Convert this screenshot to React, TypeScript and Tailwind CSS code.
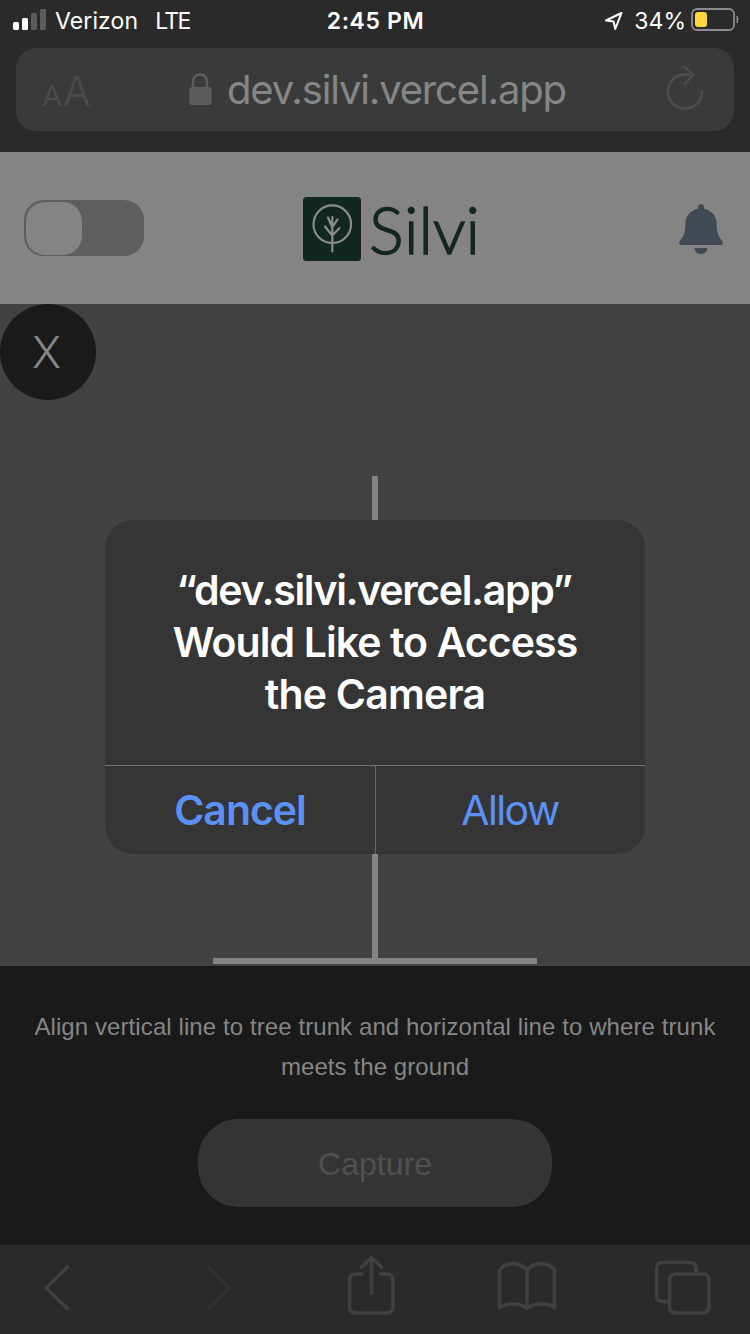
import React from 'react';

const ui = "font-['Inter','Liberation_Sans',sans-serif]";

function StatusBar() {
  return (
    <div className={`${ui} grid h-10 grid-cols-3 items-center text-[23px] leading-[42px] text-white`}>
      <div className="flex h-10 items-center pl-[13px]">
        <svg className="-mt-[2px] mr-[9px] shrink-0" width="33" height="40" viewBox="0 0 33 40">
          <rect x="0" y="22" width="6" height="8" rx="1.5" fill="#fff" />
          <rect x="9" y="18" width="6" height="12" rx="1.5" fill="#fff" />
          <rect x="18" y="13" width="6" height="17" rx="1.5" fill="#5b5b5b" />
          <rect x="27" y="9" width="6" height="21" rx="1.5" fill="#5b5b5b" />
        </svg>
        <span className="tracking-[0.1px]">Verizon</span>
        <span className="ml-[17px] tracking-[-1.7px]">LTE</span>
      </div>
      <div className="pl-px text-center font-semibold tracking-[0.6px]">2:45 PM</div>
      <div className="flex h-10 items-center justify-end pr-[11px]">
        <svg className="-mt-[2px] mr-[11px]" width="20" height="40" viewBox="0 0 20 40">
          <path d="M18.500 13 L3 20.500 L10.600 21.600 L12.200 29 Z" fill="none" stroke="#fff" strokeWidth="2" strokeLinejoin="round" />
        </svg>
        <span className="tracking-[0px]">34%</span>
        <svg className="-mt-[2px] ml-[5px]" width="48" height="40" viewBox="0 0 48 40">
          <rect x="1" y="9" width="42" height="21" rx="5" fill="none" stroke="#8b8b8b" strokeWidth="1.8" />
          <rect x="4" y="12" width="12" height="15" rx="3" fill="#fbd63f" />
          <path d="M46 16 Q48 19.500 46 23 Z" fill="#8b8b8b" stroke="#8b8b8b" />
        </svg>
      </div>
    </div>
  );
}

function AddressBar() {
  return (
    <div className={`${ui} mx-4 mt-2 flex h-[83px] items-center rounded-[20px] bg-[#393b3a]`}>
      <div className="flex w-[172px] items-baseline pl-[26px] pt-[7px] leading-[76px] text-[#4a4b4a]">
        <span className="text-[29px]">A</span>
        <span className="ml-px text-[41px] font-light">A</span>
      </div>
      <svg width="24" height="36" viewBox="0 0 24 36">
        <path d="M5 17 V11 Q5 2.500 12 2.500 Q19 2.500 19 11 V17" fill="none" stroke="#5c5c5c" strokeWidth="2.600" />
        <rect x="1.500" y="15" width="22" height="18" rx="2.500" fill="#5c5c5c" />
      </svg>
      <span className="ml-[15px] w-[340px] whitespace-nowrap text-[40px] leading-[83px] tracking-[-1.150px] text-[#868686]">dev.silvi.vercel.app</span>
      <svg className="ml-[98px] shrink-0" width="40" height="50" viewBox="0 0 40 50" fill="none" stroke="#4a4b4a" strokeWidth="2.800" strokeLinecap="round" strokeLinejoin="round">
        <path d="M37 26.500 A17 17 0 1 1 20 9.500 H27.500" />
        <path d="M19.500 2 L28.500 9.500 L19.500 19" />
      </svg>
    </div>
  );
}

function SiteHeader() {
  return (
    <header className="mt-[21px] flex h-[152px] items-center bg-[#848484]">
      <div className="ml-6 flex h-14 w-[120px] items-center rounded-[20px] bg-[#5e5e5e] px-[2px]">
        <div className="h-[53px] w-14 rounded-[19px] bg-[#848484]" />
      </div>
      <svg className="ml-[159px] mt-[2px] shrink-0" width="58" height="64" viewBox="0 0 58 64">
        <rect width="58" height="64" rx="3.500" fill="#12271f" />
        <g fill="none" stroke="#8a8c8b" strokeWidth="2.200" strokeLinecap="round" strokeLinejoin="round">
          <circle cx="29.300" cy="27.200" r="18.800" />
          <path d="M29.300 29 V54.500 M29.300 38.500 L22 29.500 M29.300 38.500 L36.500 31 M29.300 30.500 L25 20.500 M29.500 30 L34.500 22.500 M29.300 29 V20" />
        </g>
      </svg>
      <span className="ml-2 mt-[2px] w-[110px] whitespace-nowrap font-['Lato',sans-serif] text-[65px] font-light leading-[76px] tracking-[0.1px] text-[#12271f] [font-kerning:none] [-webkit-text-stroke:1.4px_#12271f]">Silvi</span>
      <svg className="ml-[200px] mt-[3px] shrink-0" width="44" height="52" viewBox="0 0 44 52" fill="#414953">
        <path d="M22 0 C24.200 0 25.300 1.800 25 4.800 C33 6.500 37.500 12 37.700 20 C38 29 39 32 43 36.500 C45 39.500 43 41 41.500 41 H2.500 C1 41 -1 39.500 1 36.500 C5 32 6 29 6.300 20 C6.500 12 11 6.500 19 4.800 C18.700 1.800 19.800 0 22 0 Z" />
        <path d="M15.500 44 H28.500 Q27.500 50 22 50 Q16.500 50 15.500 44 Z" />
      </svg>
    </header>
  );
}

function PermissionDialog() {
  return (
    <div className={`${ui} absolute left-[105px] top-[216px] flex h-[334px] w-[540px] flex-col overflow-hidden rounded-[28px] bg-[#353535] text-center`}>
      <h1 className="flex h-[245px] flex-col pt-[44px] text-[41px] font-semibold leading-[52px] text-white">
        <span className="pr-[2px] tracking-[-1.350px]">“dev.silvi.vercel.app”</span>
        <span className="tracking-[-0.920px]">Would Like to Access</span>
        <span className="tracking-[-0.800px]">the Camera</span>
      </h1>
      <div className="flex flex-1 border-t border-[#747474] text-[41px] leading-[88px] text-[#5b91f5]">
        <button className="w-[271px] border-r border-[#6a6a6a] font-semibold tracking-[-1px]">Cancel</button>
        <button className="flex-1 pr-px tracking-[-1.600px]">Allow</button>
      </div>
    </div>
  );
}

function CameraView() {
  return (
    <main className="relative h-[662px] bg-[#424242]">
      <button className={`${ui} flex size-24 items-center justify-center rounded-full bg-[#1a1a1a] pr-[3px] text-[44px] font-light text-[#868686]`}>X</button>
      <div className="absolute left-[372px] top-[172px] h-[486px] w-[6px] bg-[#848484]" />
      <div className="absolute left-[213px] top-[654px] h-[6px] w-[324px] bg-[#848484]" />
      <PermissionDialog />
    </main>
  );
}

function CapturePanel() {
  return (
    <section className="flex h-[279px] flex-col items-center bg-[#1a1a1a] pt-[41px] font-['Liberation_Sans',sans-serif]">
      <p className="text-center text-[24px] leading-10 tracking-[0.090px] text-[#868686]">
        <span className="block whitespace-nowrap">Align vertical line to tree trunk and horizontal line to where trunk</span>
        <span className="block">meets the ground</span>
      </p>
      <button className="mt-8 h-[88px] w-[354px] rounded-[40px] bg-[#343434] pt-[2px] text-[32px] text-[#505050]">Capture</button>
    </section>
  );
}

function Toolbar() {
  return (
    <nav className="h-[89px] bg-[#2a2a2a]">
      <svg width="750" height="89" viewBox="0 0 750 89" fill="none" stroke="#404040" strokeWidth="3.600" strokeLinecap="round" strokeLinejoin="round">
        <path d="M67.500 22 L46 43 L67.500 63.500" />
        <path d="M208 22 L229.500 43 L208 63.500" stroke="#303030" />
        <path d="M362 29 H356 Q349.500 29 349.500 35.500 V61.500 Q349.500 68 356 68 H386.500 Q393 68 393 61.500 V35.500 Q393 29 386.500 29 H380.500 M371.500 48 V13.500 M361.500 22 L371.500 12.500 L381.500 22" />
        <path d="M527 63.500 V25 C520 16.500 506 16.500 499.500 25 V63 C506 57.500 520 57.500 527 63.500 C534 57.500 548 57.500 554.500 63 V25 C548 16.500 534 16.500 527 25" />
        <path d="M669.500 56.500 H663 Q656.500 56.500 656.500 50 V24 Q656.500 17.500 663 17.500 H690 Q696 17.500 696 24 V28" />
        <rect x="669.500" y="29" width="39.500" height="39" rx="6" />
      </svg>
    </nav>
  );
}

export default function App() {
  return (
    <div className="h-[1334px] w-[750px] overflow-hidden bg-[#2a2a2a]">
      <StatusBar />
      <AddressBar />
      <SiteHeader />
      <CameraView />
      <CapturePanel />
      <Toolbar />
    </div>
  );
}
